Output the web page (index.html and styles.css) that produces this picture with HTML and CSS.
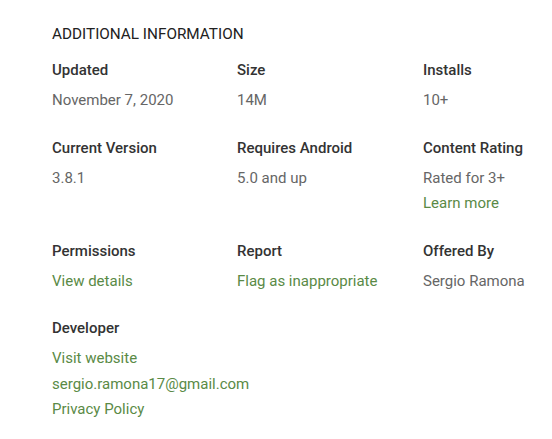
FILE: index.html
```html
<!DOCTYPE html>
<html lang="en">
<head>
    <meta charset="UTF-8">
    <meta name="viewport" content="width=device-width, initial-scale=1.0">
    <title>Additional Information</title>
    <link rel="stylesheet" href="styles.css">
</head>
<body>
    <div class="container">
        <h2 class="section-title">ADDITIONAL INFORMATION</h2>
        <div class="info-grid">
            <div class="info-item">
                <div class="info-label">Updated</div>
                <div class="info-value">November 7, 2020</div>
            </div>
            <div class="info-item">
                <div class="info-label">Size</div>
                <div class="info-value">14M</div>
            </div>
            <div class="info-item">
                <div class="info-label">Installs</div>
                <div class="info-value">10+</div>
            </div>
            <div class="info-item">
                <div class="info-label">Current Version</div>
                <div class="info-value">3.8.1</div>
            </div>
            <div class="info-item">
                <div class="info-label">Requires Android</div>
                <div class="info-value">5.0 and up</div>
            </div>
            <div class="info-item">
                <div class="info-label">Content Rating</div>
                <div class="info-value">Rated for 3+</div>
                <a class="info-link" href="#">Learn more</a>
            </div>
            <div class="info-item">
                <div class="info-label">Permissions</div>
                <a class="info-link" href="#">View details</a>
            </div>
            <div class="info-item">
                <div class="info-label">Report</div>
                <a class="info-link" href="#">Flag as inappropriate</a>
            </div>
            <div class="info-item">
                <div class="info-label">Offered By</div>
                <div class="info-value">Sergio Ramona</div>
            </div>
            <div class="info-item">
                <div class="info-label">Developer</div>
                <a class="info-link" href="#">Visit website</a>
                <a class="info-link" href="#">sergio.ramona17@gmail.com</a>
                <a class="info-link" href="#">Privacy Policy</a>
            </div>
        </div>
    </div>
</body>
</html>
```

FILE: styles.css
```css
body {
    font-family: Roboto, 'Noto Sans', sans-serif;
    background-color: #ffffff;
    color: #333333;
    margin: 0;
    padding: 0;
}
.container {
    padding: 24px 0 0 52px;
}
.section-title {
    margin: 0 0 16px 0;
    font-size: 15.3px;
    font-weight: 400;
    line-height: 20px;
    color: #212121;
}
.info-grid {
    display: grid;
    grid-template-columns: 185px 186px 1fr;
    row-gap: 24px;
}
.info-item {
    display: flex;
    flex-direction: column;
    align-items: flex-start;
    white-space: nowrap;
}
.info-label {
    font-size: 15px;
    font-weight: 500;
    line-height: 20px;
    color: #333333;
    margin-bottom: 8px;
}
.info-value,
.info-link {
    font-size: 15px;
    line-height: 25.5px;
}
.info-value {
    color: #666666;
}
.info-link {
    color: #5a8a46;
    text-decoration: none;
}
```
